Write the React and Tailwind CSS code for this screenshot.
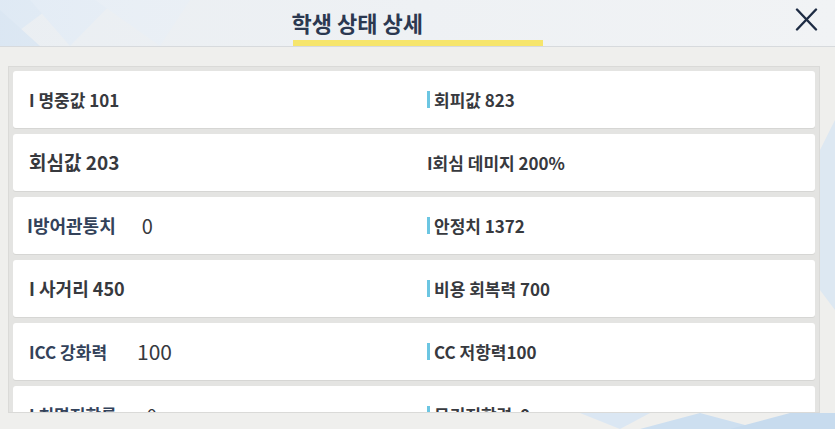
import React from 'react';

const rows = [
  {
    left: <span className="text-[17px] font-bold">I 명중값 101</span>,
    right: { text: '회피값 823', bar: true },
  },
  {
    left: <span className="text-[19px] font-bold">회심값 203</span>,
    right: { text: 'I회심 데미지 200%', bar: false },
  },
  {
    left: (
      <>
        <span className="text-[18px] font-bold text-[#33425a] -ml-[2px]">I방어관통치</span>
        <span className="ml-[26px] text-[20px] font-normal">0</span>
      </>
    ),
    right: { text: '안정치 1372', bar: true },
  },
  {
    left: <span className="text-[18px] font-bold">I 사거리 450</span>,
    right: { text: '비용 회복력 700', bar: true },
  },
  {
    left: (
      <>
        <span className="text-[17px] font-bold text-[#33425a]">ICC 강화력</span>
        <span className="ml-[30px] text-[21px] font-normal">100</span>
      </>
    ),
    right: { text: 'CC 저항력100', bar: true },
  },
  {
    left: (
      <>
        <span className="text-[17px] font-bold text-[#33425a]">I 치명저항률</span>
        <span className="ml-[30px] text-[18px] font-normal">0</span>
      </>
    ),
    right: { text: '무기저항력  0', bar: true },
  },
];

const Backdrop = () => (
  <svg className="absolute inset-0 pointer-events-none" width="835" height="429" viewBox="0 0 835 429">
    <polygon points="0,0 60,0 0,45" fill="#d3e3f2" />
    <polygon points="30,0 115,0 70,46" fill="#dde9f5" />
    <polygon points="0,10 40,46 0,46" fill="#c9dcee" />
    <polygon points="95,0 190,0 160,46" fill="#e6eef6" />
    <polygon points="820,150 835,120 835,310 820,290" fill="#dde8f2" />
    <polygon points="640,429 700,413 760,429" fill="#cddff0" />
    <polygon points="730,429 790,413 835,413 835,429" fill="#c7dbee" />
    <polygon points="580,413 650,413 620,429" fill="#dbe7f3" />
  </svg>
);

const Card = ({ row }) => (
  <div className="h-[57px] shrink-0 bg-white rounded-[3px] grid grid-cols-[401px_1fr] items-center shadow-[0_1px_0_#d6d6d4]">
    <div className="pl-[16px] flex items-center whitespace-pre">{row.left}</div>
    <div className="pl-[13px] flex items-center whitespace-pre">
      {row.right.bar && <span className="w-[3px] h-[17px] bg-[#6cc6e2] mr-[4px]" />}
      <span className="text-[17px] font-bold">{row.right.text}</span>
    </div>
  </div>
);

export default function App() {
  return (
    <div className="relative w-[835px] h-[429px] overflow-hidden bg-[#efefed] text-[#37393e] font-['Noto_Sans_CJK_KR','Noto_Sans',sans-serif]">
      <Backdrop />

      <header className="relative h-[47px] grid grid-cols-[1fr_250px_1fr] border-b border-[#d7dadd] bg-gradient-to-r from-[#e7eef6]/60 via-[#eef1f4] to-[#f1f3f5]">
        <div />
        <div className="flex flex-col justify-end">
          <div className="text-[22px] font-bold leading-[30px] text-[#2b3850] mb-[3px] -ml-[1px]">학생 상태 상세</div>
          <div className="h-[6px] bg-[#f6e56c]" />
        </div>
        <div className="flex justify-end items-start pt-[8px] pr-[17px]">
          <svg width="23" height="23" viewBox="0 0 23 23">
            <path d="M2 1.5 L21 21.5 M21 1.5 L2 21.5" stroke="#1e2c44" strokeWidth="2.4" strokeLinecap="round" />
          </svg>
        </div>
      </header>

      <div className="relative mt-[19px] ml-[8px] w-[812px] h-[347px] overflow-hidden bg-[#e4e4e2] border border-[#dadad8] p-[4px] flex flex-col gap-[6px]">
        {rows.map((row, i) => (
          <Card key={i} row={row} />
        ))}
      </div>
    </div>
  );
}
